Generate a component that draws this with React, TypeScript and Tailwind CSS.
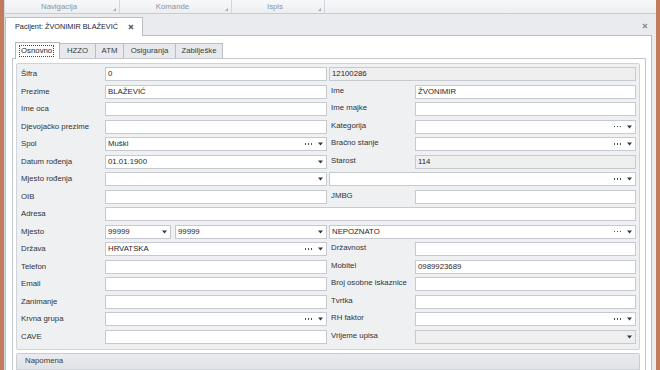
import React from 'react';

type Cell = {
  w: string;
  value?: string;
  dots?: boolean;
  arrow?: boolean;
  ro?: boolean;
};

type Row = {
  label: string;
  left: Cell[];
  rightLabel?: string;
  right?: Cell;
};

function Dots() {
  return (
    <span className="flex items-center gap-[1.5px] mr-[6px]">
      <i className="block w-[1.5px] h-[1.5px] bg-[#4a4d52]" />
      <i className="block w-[1.5px] h-[1.5px] bg-[#4a4d52]" />
      <i className="block w-[1.5px] h-[1.5px] bg-[#4a4d52]" />
    </span>
  );
}

function Arrow() {
  return (
    <svg width="5" height="4" viewBox="0 0 5 4" className="block">
      <path d="M0 0.5H5L2.5 3.5Z" fill="#33363b" />
    </svg>
  );
}

function Field({ w, value, dots, arrow, ro }: Cell) {
  return (
    <div
      className={`${w} h-[14px] shrink-0 border border-[#c6cad0] ${ro ? 'bg-[#efefef]' : 'bg-white'} flex items-center pl-[2px] pr-[3px]`}
    >
      <span className="flex-1 truncate text-[#1f1f1f]">{value}</span>
      {dots && <Dots />}
      {arrow && <Arrow />}
    </div>
  );
}

const rows: Row[] = [
  { label: 'Šifra', left: [{ w: 'w-[222px]', value: '0' }], right: { w: 'w-[307px]', value: '12100286', ro: true } },
  { label: 'Prezime', left: [{ w: 'w-[222px]', value: 'BLAŽEVIĆ' }], rightLabel: 'Ime', right: { w: 'w-[221px]', value: 'ŽVONIMIR' } },
  { label: 'Ime oca', left: [{ w: 'w-[222px]' }], rightLabel: 'Ime majke', right: { w: 'w-[221px]' } },
  { label: 'Djevojačko prezime', left: [{ w: 'w-[222px]' }], rightLabel: 'Kategorija', right: { w: 'w-[221px]', dots: true, arrow: true } },
  { label: 'Spol', left: [{ w: 'w-[222px]', value: 'Muški', dots: true, arrow: true }], rightLabel: 'Bračno stanje', right: { w: 'w-[221px]', dots: true, arrow: true } },
  { label: 'Datum rođenja', left: [{ w: 'w-[222px]', value: '01.01.1900', arrow: true }], rightLabel: 'Starost', right: { w: 'w-[221px]', value: '114', ro: true } },
  { label: 'Mjesto rođenja', left: [{ w: 'w-[222px]', arrow: true }], right: { w: 'w-[307px]', dots: true, arrow: true } },
  { label: 'OIB', left: [{ w: 'w-[222px]' }], rightLabel: 'JMBG', right: { w: 'w-[221px]' } },
  { label: 'Adresa', left: [{ w: 'w-[531px]' }] },
  { label: 'Mjesto', left: [{ w: 'w-[66px]', value: '99999', arrow: true }, { w: 'w-[152px]', value: '99999', arrow: true }], right: { w: 'w-[307px]', value: 'NEPOZNATO', dots: true, arrow: true } },
  { label: 'Država', left: [{ w: 'w-[222px]', value: 'HRVATSKA', dots: true, arrow: true }], rightLabel: 'Državnost', right: { w: 'w-[221px]' } },
  { label: 'Telefon', left: [{ w: 'w-[222px]' }], rightLabel: 'Mobitel', right: { w: 'w-[221px]', value: '0989923689' } },
  { label: 'Email', left: [{ w: 'w-[222px]' }], rightLabel: 'Broj osobne iskaznice', right: { w: 'w-[221px]' } },
  { label: 'Zanimanje', left: [{ w: 'w-[222px]' }], rightLabel: 'Tvrtka', right: { w: 'w-[221px]' } },
  { label: 'Krvna grupa', left: [{ w: 'w-[222px]', dots: true, arrow: true }], rightLabel: 'RH faktor', right: { w: 'w-[221px]', dots: true, arrow: true } },
  { label: 'CAVE', left: [{ w: 'w-[222px]' }], rightLabel: 'Vrijeme upisa', right: { w: 'w-[221px]', arrow: true, ro: true } },
];

function MenuSection({ w, label }: { w: string; label: string }) {
  return (
    <div className={`${w} h-full flex border-r border-[#d2d5da]`}>
      <span className="flex-1 text-center leading-[13px] text-[#8e939b]">{label}</span>
      <span className="self-end mb-[2px] mr-[3px] w-0 h-0 border-l-[3px] border-l-transparent border-b-[3px] border-b-[#a3a7ae]" />
    </div>
  );
}

const tabs = ['Osnovno', 'HZZO', 'ATM', 'Osiguranja', 'Zabilješke'];
const tabW = ['w-[45px]', 'w-[36px]', 'w-[28px]', 'w-[52px]', 'w-[47px]'];

export default function App() {
  return (
    <div className="w-[660px] h-[370px] bg-[#c27c5b] flex overflow-hidden font-['Liberation_Sans',Arial,sans-serif] text-[7.8px] text-[#303338]">
      <div className="ml-[4px] w-[652px] h-full bg-[#e9ebee] border-l border-[#d6d9dd] flex flex-col">
        {/* top menu groups */}
        <div className="h-[14px] shrink-0 flex bg-gradient-to-b from-[#f7f8fa] to-[#eceef1] border-b border-[#c8cbd1]">
          <MenuSection w="w-[115px]" label="Navigacija" />
          <MenuSection w="w-[112px]" label="Komande" />
          <MenuSection w="w-[93px]" label="Ispis" />
        </div>

        {/* document tabs */}
        <div className="h-[21px] shrink-0 flex items-end">
          <div className="relative z-10 -mb-px h-[19px] w-[138px] shrink-0 bg-white border border-b-0 border-[#b8bcc3] flex items-center pl-[9px] whitespace-nowrap">
            <span className="text-[7.3px] text-[#1f2226]">Pacijent: ŽVONIMIR BLAŽEVIĆ</span>
            <svg width="6" height="6" viewBox="0 0 6 6" className="ml-[10px] shrink-0">
              <path d="M1 1L5 5M5 1L1 5" stroke="#5d6168" strokeWidth="1.6" />
            </svg>
          </div>
          <div className="flex-1" />
          <svg width="6" height="6" viewBox="0 0 6 6" className="self-center mt-[3px] mr-[8px]">
            <path d="M1 1L5 5M5 1L1 5" stroke="#8a8e95" strokeWidth="1.4" />
          </svg>
        </div>

        {/* document panel */}
        <div className="w-[647px] flex-1 bg-white border border-[#b8bcc3] flex flex-col">
          <div className="flex items-end pl-[9px] pt-[5px] h-[22px] shrink-0">
            {tabs.map((t, i) =>
              i === 0 ? (
                <div key={t} className={`${tabW[i]} relative z-10 -mb-px h-[17px] bg-white border border-b-0 border-[#b3b7be] flex items-center pl-[3px]`}>
                  <span className="border border-dotted border-[#444] px-[1px] leading-[10px] text-[#1f2226]">{t}</span>
                </div>
              ) : (
                <div key={t} className={`${tabW[i]} h-[15px] bg-[#e7e9ec] border border-l-0 border-b-0 border-[#b9bdc4] flex items-center justify-center text-[#3a3d42]`}>
                  {t}
                </div>
              )
            )}
          </div>

          <div className="ml-[6px] w-[634px] flex-1 border border-[#c3c7cd] bg-white">
            <div className="ml-[3px] mt-[4px] w-[624px] bg-[#eef0f2] border border-[#d0d3d8] rounded-[2px] pl-[4px] pt-[3px] pb-[5px] flex flex-col gap-[3.5px]">
              {rows.map((r) => (
                <div key={r.label} className="flex h-[14px] items-center">
                  <span className="w-[84px] shrink-0 truncate">{r.label}</span>
                  <div className="flex gap-[4px]">
                    {r.left.map((c, i) => (
                      <Field key={i} {...c} />
                    ))}
                  </div>
                  {r.right && (
                    <div className="flex ml-[2px]">
                      {r.rightLabel !== undefined && (
                        <span className="w-[86px] shrink-0 pl-[2px] truncate">{r.rightLabel}</span>
                      )}
                      <Field {...r.right} />
                    </div>
                  )}
                </div>
              ))}
            </div>

            <div className="ml-[3px] mt-[3px] w-[624px] h-[40px] border border-[#c9cdd2] rounded-[2px] bg-white">
              <div className="h-[16px] bg-gradient-to-b from-[#e9ebee] to-[#e0e2e6] border-b border-[#d0d3d8] flex items-center pl-[8px] text-[#3a3d42]">
                Napomena
              </div>
            </div>
          </div>
        </div>
      </div>
    </div>
  );
}
